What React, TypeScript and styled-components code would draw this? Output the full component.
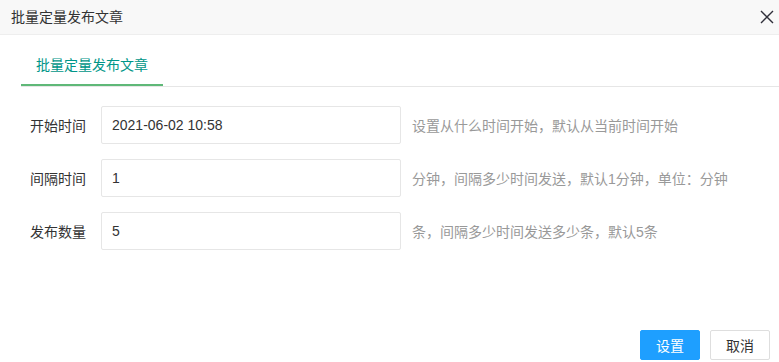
import React from 'react';
import styled, { createGlobalStyle } from 'styled-components';

const GlobalStyle = createGlobalStyle`
  html, body {
    margin: 0;
    padding: 0;
    background: #fff;
  }
  body {
    font-family: 'Liberation Sans', 'Noto Sans CJK SC', sans-serif;
    font-size: 14px;
    color: #333;
  }
`;

const fields = [
  { label: '开始时间', value: '2021-06-02 10:58', tip: '设置从什么时间开始，默认从当前时间开始' },
  { label: '间隔时间', value: '1', tip: '分钟，间隔多少时间发送，默认1分钟，单位：分钟' },
  { label: '发布数量', value: '5', tip: '条，间隔多少时间发送多少条，默认5条' },
];

const App: React.FC = () => {
  return (
    <Layer>
      <GlobalStyle />
      <TitleBar>
        <span>批量定量发布文章</span>
        <CloseButton aria-label="close">
          <svg width="14" height="14" viewBox="0 0 14 14">
            <path d="M1 1 L13 13 M13 1 L1 13" stroke="#2f2f3a" strokeWidth="1.4" fill="none" />
          </svg>
        </CloseButton>
      </TitleBar>

      <Content>
        <TabTitle>
          <TabItem active>批量定量发布文章</TabItem>
        </TabTitle>

        <Form>
          {fields.map((f) => (
            <FormItem key={f.label}>
              <FormLabel>{f.label}</FormLabel>
              <Input defaultValue={f.value} />
              <WordAux>{f.tip}</WordAux>
            </FormItem>
          ))}
        </Form>
      </Content>

      <BtnBar>
        <Btn primary>设置</Btn>
        <Btn>取消</Btn>
      </BtnBar>
    </Layer>
  );
};

const Layer = styled.div`
  width: 779px;
  height: 362px;
  display: flex;
  flex-direction: column;
  background: #fff;
  overflow: hidden;
`;

const TitleBar = styled.div`
  height: 34px;
  line-height: 34px;
  padding: 0 0 0 11px;
  background: #f8f8f8;
  border-bottom: 1px solid #eee;
  color: #333;
  font-size: 14px;
  display: flex;
  align-items: center;
  justify-content: space-between;
`;

const CloseButton = styled.span`
  display: flex;
  width: 14px;
  height: 14px;
  margin-right: 5px;
  margin-top: -1px;
  cursor: pointer;
`;

const Content = styled.div`
  flex: 1;
  padding: 11px 0 0 21px;
`;

const TabTitle = styled.ul`
  margin: 0;
  padding: 0;
  list-style: none;
  height: 40px;
  border-bottom: 1px solid #e6e6e6;
  display: flex;
`;

const TabItem = styled.li<{ active?: boolean }>`
  padding: 0 15px;
  height: 40px;
  line-height: 38px;
  font-size: 14px;
  color: ${(p) => (p.active ? '#009688' : '#333')};
  border-bottom: 2px solid ${(p) => (p.active ? '#5fb878' : 'transparent')};
  box-sizing: border-box;
  cursor: pointer;
`;

const Form = styled.div`
  display: flex;
  flex-direction: column;
  gap: 15px;
  margin-top: 19px;
`;

const FormItem = styled.div`
  display: flex;
  align-items: center;
  height: 38px;
`;

const FormLabel = styled.label`
  width: 65px;
  padding-right: 15px;
  text-align: right;
  font-size: 14px;
  color: #333;
`;

const Input = styled.input`
  width: 300px;
  height: 38px;
  box-sizing: border-box;
  border: 1px solid #e6e6e6;
  border-radius: 2px;
  padding-left: 10px;
  font-family: 'Liberation Sans', 'Noto Sans CJK SC', sans-serif;
  font-size: 14px;
  color: #333;
  outline: none;
  background: #fff;
`;

const WordAux = styled.div`
  margin-left: 11px;
  font-size: 14px;
  color: #999;
`;

const BtnBar = styled.div`
  display: flex;
  justify-content: flex-end;
  gap: 10px;
  padding: 0 9px 2px 0;
`;

const Btn = styled.button<{ primary?: boolean }>`
  height: 30px;
  width: 60px;
  box-sizing: border-box;
  border: 1px solid ${(p) => (p.primary ? '#1e9fff' : '#dedede')};
  background: ${(p) => (p.primary ? '#1e9fff' : '#fff')};
  color: ${(p) => (p.primary ? '#fff' : '#333')};
  border-radius: 2px;
  font-family: 'Liberation Sans', 'Noto Sans CJK SC', sans-serif;
  font-size: 14px;
  padding: 0;
  cursor: pointer;
`;

export default App;
